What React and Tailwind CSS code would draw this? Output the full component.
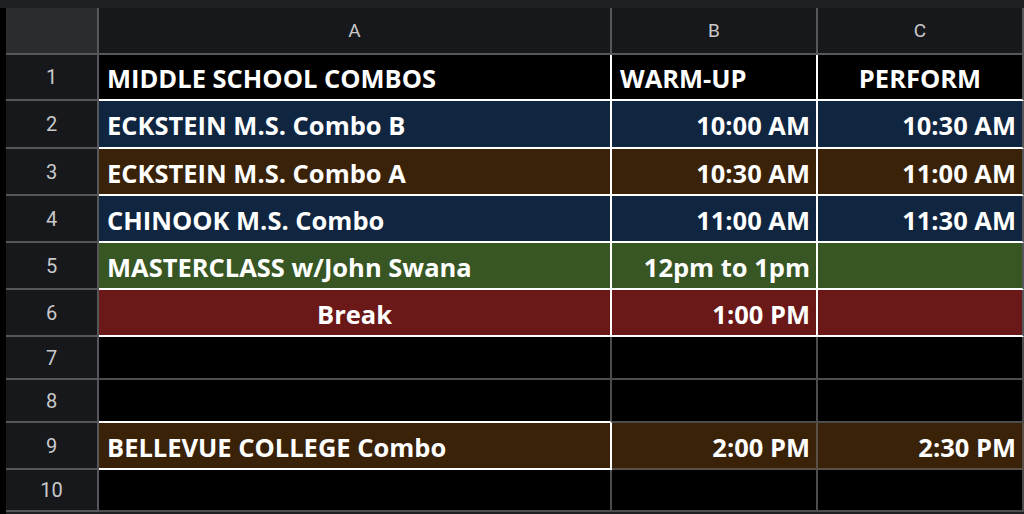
const NAVY = 'bg-[#0f2540]'
const BROWN = 'bg-[#3a2208]'
const GREEN = 'bg-[#375623]'
const RED = 'bg-[#6b1818]'

const rows = [
  { n: 1, h: 'h-[46px]', bg: 'bg-black', line: 'border-white', a: 'MIDDLE SCHOOL COMBOS', b: 'WARM-UP', c: 'PERFORM', bAlign: 'justify-start pl-[8px]', cAlign: 'justify-center' },
  { n: 2, h: 'h-[48px]', bg: NAVY, line: 'border-white', a: 'ECKSTEIN M.S. Combo B', b: '10:00 AM', c: '10:30 AM' },
  { n: 3, h: 'h-[47px]', bg: BROWN, line: 'border-white', a: 'ECKSTEIN M.S. Combo A', b: '10:30 AM', c: '11:00 AM' },
  { n: 4, h: 'h-[47px]', bg: NAVY, line: 'border-white', a: 'CHINOOK M.S. Combo', b: '11:00 AM', c: '11:30 AM' },
  { n: 5, h: 'h-[47px]', bg: GREEN, line: 'border-white', a: 'MASTERCLASS w/John Swana', b: '12pm to 1pm', c: '' },
  { n: 6, h: 'h-[47px]', bg: RED, line: 'border-white', a: 'Break', b: '1:00 PM', c: '', aAlign: 'justify-center' },
  { n: 7, h: 'h-[43px]', bg: 'bg-black', line: 'border-[#4d4d4d]', a: '', b: '', c: '' },
  { n: 8, h: 'h-[43px]', bg: 'bg-black', line: 'border-[#4d4d4d]', a: '', b: '', c: '', aLine: 'border-b-white' },
  { n: 9, h: 'h-[47px]', bg: BROWN, line: 'border-[#5a5048]', a: 'BELLEVUE COLLEGE Combo', b: '2:00 PM', c: '2:30 PM', aBox: true },
  { n: 10, h: 'h-[42px]', bg: 'bg-black', line: 'border-[#4d4d4d]', a: '', b: '', c: '' },
]

const font = { fontFamily: '"Open Sans", "Noto Sans", sans-serif' }

function Cell({ w, bg, line, align, children, extra = '' }) {
  return (
    <div className={`${w} h-full shrink-0 flex items-center border-r-2 border-b-2 ${bg} ${line} ${align} ${extra}`}>
      <span className="text-white font-bold text-[25.5px] leading-none pt-[4px] whitespace-nowrap" style={font}>
        {children}
      </span>
    </div>
  )
}

export default function App() {
  return (
    <div className="w-[1024px] h-[514px] bg-[#1e1f22] overflow-hidden flex flex-col" style={{ fontFamily: 'Roboto, sans-serif' }}>
      <div className="h-[8px] shrink-0" />
      <div className="flex flex-1 min-h-0">
        <div className="w-[6px] bg-black shrink-0" />
        <div className="flex flex-col">
          <div className="flex h-[47px] shrink-0 bg-[#17181b] border-b-2 border-[#56575a] text-[#c9c9cb] text-[19px]">
            <div className="w-[93px] bg-[#2b2c2f] border-r-2 border-[#56575a]" />
            <div className="w-[513px] flex items-center justify-center pt-[2px] border-r-2 border-[#56575a]">A</div>
            <div className="w-[206px] flex items-center justify-center pt-[2px] border-r-2 border-[#56575a]">B</div>
            <div className="w-[206px] flex items-center justify-center pt-[2px] border-r-2 border-[#56575a]">C</div>
          </div>
          {rows.map(r => (
            <div key={r.n} className={`flex ${r.h} shrink-0`}>
              <div className="w-[93px] h-full flex items-center justify-center bg-[#17181b] border-r-2 border-b-2 border-[#56575a] text-[#c9c9cb] text-[20px]">
                {r.n}
              </div>
              <Cell
                w="w-[513px]"
                bg={r.bg}
                line={r.aBox ? 'border-white' : r.line}
                align={`${r.aAlign || 'justify-start'} ${r.aAlign ? '' : 'pl-[8px]'}`}
                extra={r.aLine || ''}
              >
                {r.a}
              </Cell>
              <Cell w="w-[206px]" bg={r.bg} line={r.line} align={r.bAlign || 'justify-end pr-[6px]'}>
                {r.b}
              </Cell>
              <Cell
                w="w-[206px]"
                bg={r.bg}
                line={r.n <= 6 ? 'border-b-white border-r-[#56575a]' : r.line}
                align={r.cAlign || 'justify-end pr-[6px]'}
              >
                {r.c}
              </Cell>
            </div>
          ))}
        </div>
      </div>
    </div>
  )
}
